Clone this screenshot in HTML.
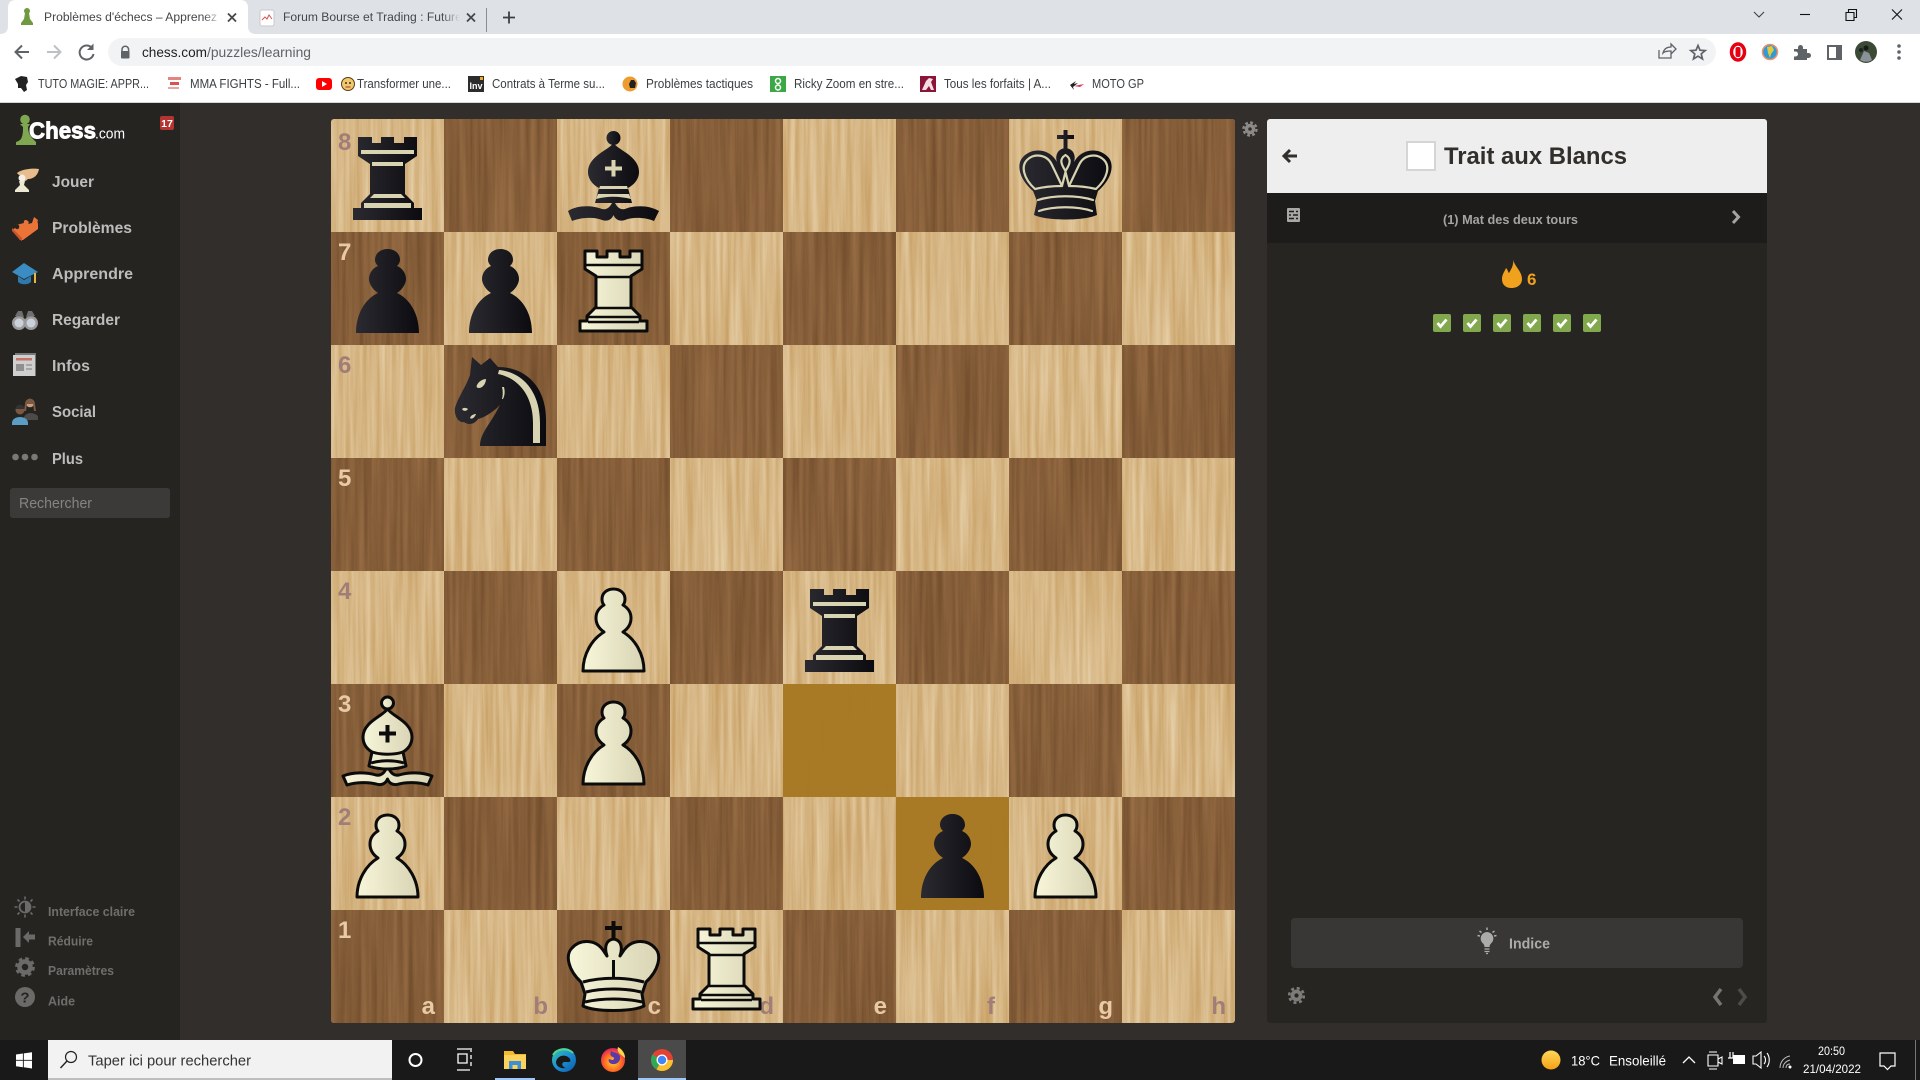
<!DOCTYPE html>
<html lang="fr">
<head>
<meta charset="utf-8">
<title>Problèmes d'échecs</title>
<style>
html,body{margin:0;padding:0;background:#312e2b;width:1920px;height:1080px;overflow:hidden}
svg{display:block;position:absolute;left:0;top:0}
text{font-family:"Liberation Sans",sans-serif;white-space:pre}
.tab{font-size:12.1px}
.bm{font-size:12.5px;fill:#3c4043}
.nav{font-size:16px;font-weight:bold;fill:#bdbcbb}
.low{font-size:13px;font-weight:bold;fill:#6f6e6c}
.coL{font-size:24px;font-weight:bold;fill:#a07d76}
.coD{font-size:24px;font-weight:bold;fill:#e9caa6}
.wk{fill:url(#wg);stroke:#0b0b0b;stroke-width:3;stroke-linejoin:round}
.bk{fill:url(#bg)}
.cr{fill:#d8d3b0}
.crl{fill:none;stroke:#d8d3b0;stroke-width:2.2;stroke-linecap:round;stroke-linejoin:round}
.kl{fill:none;stroke:#0b0b0b;stroke-width:3}
.ic{fill:none;stroke:#5f6368;stroke-width:2}
</style>
</head>
<body>
<svg width="1920" height="1080" viewBox="0 0 1920 1080" xmlns="http://www.w3.org/2000/svg">
<defs>
<linearGradient id="wg" x1="0" x2="1" y1="0" y2="0"><stop offset="0" stop-color="#f8f6da"/><stop offset="1" stop-color="#d8d4b4"/></linearGradient>
<linearGradient id="bg" x1="0" x2="1" y1="0" y2="0"><stop offset="0" stop-color="#2a2a30"/><stop offset="1" stop-color="#0b0b10"/></linearGradient>
<linearGradient id="fade1" gradientUnits="userSpaceOnUse" x1="204" x2="222" y1="0" y2="0"><stop offset="0" stop-color="#45474a"/><stop offset="1" stop-color="#fff"/></linearGradient>
<linearGradient id="fade2" gradientUnits="userSpaceOnUse" x1="442" x2="460" y1="0" y2="0"><stop offset="0" stop-color="#45474a"/><stop offset="1" stop-color="#dee1e6"/></linearGradient>
<linearGradient id="sun" x1="0" x2="0" y1="0" y2="1"><stop offset="0" stop-color="#ffd75a"/><stop offset="1" stop-color="#f59f14"/></linearGradient>
<linearGradient id="edge" x1="0" x2="1" y1="0" y2="1"><stop offset="0" stop-color="#37c7a5"/><stop offset=".5" stop-color="#1b8fd6"/><stop offset="1" stop-color="#0c5aa8"/></linearGradient>
<radialGradient id="ff" cx=".5" cy=".6" r=".6"><stop offset="0" stop-color="#ffcf3a"/><stop offset=".6" stop-color="#ff6a1e"/><stop offset="1" stop-color="#d81f6a"/></radialGradient>
<filter id="woodL" x="0" y="0" width="100%" height="100%" color-interpolation-filters="sRGB">
<feTurbulence type="fractalNoise" baseFrequency="0.2 0.006" numOctaves="4" seed="7"/>
<feColorMatrix type="matrix" values="0.15 0 0 0 0.765  0.24 0 0 0 0.595  0.34 0 0 0 0.35  0 0 0 0 1"/>
</filter>
<filter id="woodD" x="0" y="0" width="100%" height="100%" color-interpolation-filters="sRGB">
<feTurbulence type="fractalNoise" baseFrequency="0.18 0.005" numOctaves="4" seed="21"/>
<feColorMatrix type="matrix" values="0.2 0 0 0 0.425  0.17 0 0 0 0.285  0.13 0 0 0 0.16  0 0 0 0 1"/>
</filter>
<clipPath id="boardClip"><rect x="0" y="0" width="904" height="904" rx="3"/></clipPath>
<clipPath id="darkSq"><path d="M113 0h113v113h-113zM339 0h113v113h-113zM565 0h113v113h-113zM791 0h113v113h-113zM0 113h113v113h-113zM226 113h113v113h-113zM452 113h113v113h-113zM678 113h113v113h-113zM113 226h113v113h-113zM339 226h113v113h-113zM565 226h113v113h-113zM791 226h113v113h-113zM0 339h113v113h-113zM226 339h113v113h-113zM452 339h113v113h-113zM678 339h113v113h-113zM113 452h113v113h-113zM339 452h113v113h-113zM565 452h113v113h-113zM791 452h113v113h-113zM0 565h113v113h-113zM226 565h113v113h-113zM452 565h113v113h-113zM678 565h113v113h-113zM113 678h113v113h-113zM339 678h113v113h-113zM565 678h113v113h-113zM791 678h113v113h-113zM0 791h113v113h-113zM226 791h113v113h-113zM452 791h113v113h-113zM678 791h113v113h-113z"/></clipPath>
<clipPath id="t1c"><rect x="40" y="0" width="182" height="34"/></clipPath>
<clipPath id="t2c"><rect x="280" y="0" width="180" height="34"/></clipPath>
</defs>

<!-- page -->
<rect width="1920" height="1080" fill="#312e2b"/>

<!-- chrome tabs -->
<rect width="1920" height="34" fill="#dee1e6"/>
<rect y="34" width="1920" height="68" fill="#fff"/>
<rect y="102" width="1920" height="1" fill="#d5d5d5"/>
<path d="M0 34Q8 34 8 26V8Q8 0 16 0H240Q248 0 248 8V26Q248 34 256 34Z" fill="#fff"/>
<!-- tab 1 favicon pawn -->
<g fill="#6f9a3f"><circle cx="27" cy="11" r="3"/><path d="M25 13h4l1 6 3 4v2H21v-2l3-4z"/></g>
<g clip-path="url(#t1c)"><text x="44" y="21" class="tab" fill="url(#fade1)">Problèmes d'échecs – Apprenez à jouer</text></g>
<path d="M228 13.500l8 8M236 13.500l-8 8" stroke="#45474a" stroke-width="1.800"/>
<!-- tab 2 -->
<rect x="260" y="10" width="14" height="16" rx="2" fill="#fff" stroke="#c9c9c9"/>
<path d="M262 20l3-3 2 2 2-4 3 4" fill="none" stroke="#d9534f" stroke-width="1"/>
<g clip-path="url(#t2c)"><text x="283" y="21" class="tab" fill="url(#fade2)">Forum Bourse et Trading : Futures et options</text></g>
<path d="M467 13.500l8 8M475 13.500l-8 8" stroke="#45474a" stroke-width="1.800"/>
<rect x="486" y="8" width="1" height="24" fill="#8b8e92"/>
<path d="M509 11.500v12M503 17.500h12" stroke="#3c4043" stroke-width="1.800"/>
<!-- window controls -->
<path d="M1754 12l5 5 5-5" fill="none" stroke="#3c4043" stroke-width="1.100"/>
<path d="M1800 14.500h10" stroke="#111" stroke-width="1.100"/>
<path d="M1846 12.500h8v8h-8zM1848.500 12.500v-3h8v8h-2.500" fill="none" stroke="#111" stroke-width="1.100"/>
<path d="M1892 9.500l10 10M1902 9.500l-10 10" stroke="#111" stroke-width="1.100"/>

<!-- toolbar -->
<rect x="108" y="38" width="1608" height="28" rx="14" fill="#f1f3f4"/>
<path d="M29 52H16M22 45.500l-6.500 6.500 6.500 6.500" fill="none" stroke="#5f6368" stroke-width="2"/>
<path d="M47 52h13M54 45.500l6.500 6.500-6.500 6.500" fill="none" stroke="#bdc1c6" stroke-width="2"/>
<path d="M92 48a7 7 0 1 0 1.500 6" fill="none" stroke="#5f6368" stroke-width="2"/><path d="M93.500 43.500v6.500h-6.500z" fill="#5f6368"/>
<path d="M122 52v-2.500a3.300 3.300 0 0 1 6.600 0V52" fill="none" stroke="#5f6368" stroke-width="1.500"/><rect x="121" y="51" width="8.500" height="7.500" rx="1" fill="#5f6368"/>
<text x="142" y="57" font-size="14" fill="#202124" textLength="65" lengthAdjust="spacingAndGlyphs">chess.com</text>
<text x="207" y="57" font-size="14" fill="#5f6368" textLength="104" lengthAdjust="spacingAndGlyphs">/puzzles/learning</text>
<!-- share -->
<path d="M1659 50v8h12v-4M1663 53c1-4 4-6 8-6v-3l5 5-5 5v-3c-3 0-6 0-8 2z" fill="none" stroke="#5f6368" stroke-width="1.300"/>
<!-- star -->
<path d="M1698 45.500l2 4.700 5.200.4-4 3.300 1.300 5-4.500-2.700-4.500 2.700 1.300-5-4-3.300 5.200-.4z" fill="none" stroke="#5f6368" stroke-width="1.700"/>
<!-- opera -->
<ellipse cx="1738" cy="52" rx="6.500" ry="8" fill="#fff" stroke="#e60012" stroke-width="3.500"/><rect x="1735.500" y="47" width="5" height="10" rx="2" fill="#e60012"/>
<!-- globe -->
<circle cx="1770" cy="52" r="7.500" fill="#2f9ad6" stroke="#f0906c" stroke-width="1.500"/><path d="M1767 47l5-1 2 4-3 4-1 4-2-5z" fill="#e0c93a"/>
<!-- puzzle -->
<path d="M1794 49h4v-1.500a2.500 2.500 0 0 1 5 0V49h4v4h1.500a2.500 2.500 0 0 1 0 5H1807v2h-13v-3.500h1.500a2.500 2.500 0 0 0 0-5H1794z" fill="#5f6368"/>
<!-- side panel -->
<rect x="1828" y="46" width="13" height="13" fill="none" stroke="#5f6368" stroke-width="2"/><rect x="1836" y="45" width="6" height="15" fill="#5f6368"/>
<!-- avatar -->
<circle cx="1866" cy="52" r="11" fill="#3b4a35"/><path d="M1860 60l4-9 5 2 3 7a11 11 0 0 1-12 0z" fill="#8a9298"/><circle cx="1866" cy="48" r="2.500" fill="#16181a"/><circle cx="1861" cy="50" r="2" fill="#1c2024"/>
<g fill="#5f6368"><circle cx="1899" cy="46" r="1.800"/><circle cx="1899" cy="52" r="1.800"/><circle cx="1899" cy="58" r="1.800"/></g>

<!-- bookmarks -->
<path d="M15 79l6-3 6 1 1 5-2 3 1 5-3 2-3-4-3 0 0-4z" fill="#222"/>
<text x="38" y="88" class="bm" textLength="111" lengthAdjust="spacingAndGlyphs">TUTO MAGIE: APPR...</text>
<rect x="168" y="77" width="13" height="3" fill="#e5837f"/><rect x="170" y="82" width="9" height="3" fill="#d9534f"/><rect x="168" y="87" width="11" height="2" fill="#e9a5a5"/>
<text x="190" y="88" class="bm" textLength="110" lengthAdjust="spacingAndGlyphs">MMA FIGHTS - Full...</text>
<rect x="316" y="78" width="16" height="12" rx="3" fill="#f00"/><path d="M322 81l5 3-5 3z" fill="#fff"/>
<circle cx="348" cy="84" r="6.500" fill="#f2c96a" stroke="#5a3d1a"/><circle cx="346" cy="83" r="1" fill="#333"/><circle cx="350" cy="83" r="1" fill="#333"/><path d="M345.500 87h5" stroke="#a33" stroke-width="1"/>
<text x="357" y="88" class="bm" textLength="94" lengthAdjust="spacingAndGlyphs">Transformer une...</text>
<rect x="468" y="76" width="16" height="16" fill="#2c2c2c"/><text x="469.500" y="89" font-size="9" font-weight="bold" fill="#fff">Inv</text><rect x="480" y="77" width="3" height="3" fill="#f5a623"/>
<text x="492" y="88" class="bm" textLength="113" lengthAdjust="spacingAndGlyphs">Contrats à Terme su...</text>
<circle cx="630" cy="84" r="7.500" fill="#ee9b2d"/><path d="M631 80h3l2 3-1 5h-5l-1-4z" fill="#222"/>
<text x="646" y="88" class="bm" textLength="107" lengthAdjust="spacingAndGlyphs">Problèmes tactiques</text>
<rect x="770" y="76" width="16" height="16" fill="#3aa845"/><circle cx="778" cy="81" r="2.500" fill="none" stroke="#fff" stroke-width="1.500"/><circle cx="778" cy="87.500" r="2.500" fill="none" stroke="#fff" stroke-width="1.500"/>
<text x="794" y="88" class="bm" textLength="110" lengthAdjust="spacingAndGlyphs">Ricky Zoom en stre...</text>
<rect x="920" y="76" width="16" height="16" fill="#8a1538"/><path d="M922 90l4-9 3-3 4 1-2 3 3 8h-3l-2-4-3 4z" fill="#f5dfe2"/>
<text x="944" y="88" class="bm" textLength="107" lengthAdjust="spacingAndGlyphs">Tous les forfaits | A...</text>
<path d="M1070 85l6-4-2 3 4-1-5 4 1 3z" fill="#222"/><path d="M1074 86l10-2-4 3z" fill="#d8365a"/>
<text x="1092" y="88" class="bm" textLength="52" lengthAdjust="spacingAndGlyphs">MOTO GP</text>

<!-- sidebar -->
<rect x="0" y="103" width="180" height="937" fill="#262421"/>
<!-- logo -->
<g fill="#7fa650"><circle cx="25" cy="119.500" r="4.800"/><path d="M20 124h10l-2 3c0 5 2 9 5 12l3 3v3H16v-3c3-1 4-2 5-3 2-4 2-8 2-12z"/></g>
<text x="29" y="138.500" font-size="23" font-weight="bold" fill="#fff" stroke="#fff" stroke-width=".9" textLength="67" lengthAdjust="spacingAndGlyphs">Chess</text>
<text x="95" y="138.500" font-size="15" fill="#fff" textLength="30" lengthAdjust="spacingAndGlyphs">.com</text>
<rect x="160" y="116" width="14" height="14" rx="2" fill="#b33430"/>
<text x="167" y="127" font-size="10.500" font-weight="bold" fill="#fff" text-anchor="middle">17</text>
<!-- nav icons -->
<path d="M17 173c5-4 16-5 22-4-1 6-5 10-11 10-3 3-6 3-8 1l2-4c-2-1-4-1-5-3z" fill="#e8bc8c"/>
<circle cx="22" cy="178" r="3.500" fill="#f4f2e6"/><path d="M19 181h6l-1 4 5 5v2H15v-2l5-5z" fill="#ece8d2"/>
<path d="M24 223c-1-3 2-4 4-2 1 1 1 2 0 3l4-1 2-6 4 3c-1 2 0 3 0 4l0 5-15 11-3 0-8-10 3-2c1 1 3 2 4 0 1-3-1-4-3-3z" fill="#ea7338"/><path d="M12 228l10 10 0 3-2-1-8-9z" fill="#c9532a"/>
<path d="M12 272l12-9 14 9-14 7z" fill="#3a8cc2"/><path d="M18 276v6c3 3 10 3 13 0v-6l-7 4z" fill="#2f78ab"/><rect x="34" y="273" width="2" height="10" fill="#e6b544"/>
<circle cx="19" cy="323" r="7" fill="#9b9b9b"/><circle cx="31" cy="323" r="7" fill="#9b9b9b"/><circle cx="19" cy="323" r="4.500" fill="#c9d2da"/><circle cx="31" cy="323" r="4.500" fill="#c9d2da"/><path d="M15 316l3-5h4l2 6zM35 316l-3-5h-4l-2 6z" fill="#6f6f6f"/>
<rect x="15" y="353" width="21" height="23" fill="#777"/><rect x="13" y="355" width="22" height="21" fill="#cfcfcf"/><rect x="16" y="358" width="16" height="2.500" fill="#c5726a"/><rect x="16" y="364" width="8" height="7" fill="#8f8f8f"/><rect x="26" y="364" width="6" height="2" fill="#a5a5a5"/><rect x="26" y="368" width="6" height="2" fill="#a5a5a5"/>
<circle cx="30" cy="403" r="4.300" fill="#c99f80"/><path d="M25 404c0-7 10-7 10 0l1 7h-2l-1-7h-6l-1 7h-2z" fill="#7a5a40"/><path d="M24 417c2-5 10-5 14-1v4H24z" fill="#4c4b49"/>
<circle cx="20" cy="410" r="4.500" fill="#7b5640"/><path d="M15.500 409a4.500 4.500 0 0 1 9 0z" fill="#333"/><path d="M12 423c0-8 16-8 16 0v2H12z" fill="#5b9ec5"/>
<g fill="#7a7978"><circle cx="15.500" cy="457" r="3.300"/><circle cx="25" cy="457" r="3.300"/><circle cx="34.500" cy="457" r="3.300"/></g>
<text x="52" y="187" class="nav" textLength="42" lengthAdjust="spacingAndGlyphs">Jouer</text>
<text x="52" y="233" class="nav" textLength="80" lengthAdjust="spacingAndGlyphs">Problèmes</text>
<text x="52" y="279" class="nav" textLength="81" lengthAdjust="spacingAndGlyphs">Apprendre</text>
<text x="52" y="325" class="nav" textLength="68" lengthAdjust="spacingAndGlyphs">Regarder</text>
<text x="52" y="371" class="nav" textLength="38" lengthAdjust="spacingAndGlyphs">Infos</text>
<text x="52" y="417" class="nav" textLength="44" lengthAdjust="spacingAndGlyphs">Social</text>
<text x="52" y="464" class="nav" textLength="31" lengthAdjust="spacingAndGlyphs">Plus</text>
<rect x="10" y="488" width="160" height="30" rx="3" fill="#3b3a38"/>
<text x="19" y="508" font-size="14.500" fill="#858483" textLength="73" lengthAdjust="spacingAndGlyphs">Rechercher</text>
<!-- bottom sidebar -->
<circle cx="25" cy="907" r="5.500" fill="none" stroke="#6b6a68" stroke-width="1.800"/><path d="M25 901.500a5.500 5.500 0 0 1 0 11z" fill="#6b6a68"/>
<g stroke="#6b6a68" stroke-width="1.600"><path d="M25 896.500v3M25 914.500v3M14.500 907h3M32.500 907h3M17.500 899.500l2 2M30.500 912.500l2 2M17.500 914.500l2-2M30.500 901.500l2-2"/></g>
<rect x="15.500" y="928" width="5" height="19" fill="#6b6a68"/><path d="M23 937l6-6v3.500h6v5h-6v3.500z" fill="#6b6a68"/>
<circle cx="25" cy="967" r="5.500" fill="none" stroke="#6b6a68" stroke-width="4.500"/><circle cx="25" cy="967" r="8.500" fill="none" stroke="#6b6a68" stroke-width="2.800" stroke-dasharray="3.600 3.075"/>
<circle cx="25" cy="997" r="10" fill="#6b6a68"/><text x="25" y="1002.500" font-size="15" font-weight="bold" fill="#262421" text-anchor="middle">?</text>
<text x="48" y="916" class="low" textLength="87" lengthAdjust="spacingAndGlyphs">Interface claire</text>
<text x="48" y="945.500" class="low" textLength="45" lengthAdjust="spacingAndGlyphs">Réduire</text>
<text x="48" y="975" class="low" textLength="66" lengthAdjust="spacingAndGlyphs">Paramètres</text>
<text x="48" y="1005.500" class="low" textLength="27" lengthAdjust="spacingAndGlyphs">Aide</text>

<!-- board -->
<g transform="translate(331 119)">
<g clip-path="url(#boardClip)">
<rect width="904" height="904" filter="url(#woodL)"/>
<g clip-path="url(#darkSq)"><rect width="904" height="904" filter="url(#woodD)"/></g>
<rect x="452" y="565" width="113" height="113" fill="#a97b25" opacity=".97"/>
<rect x="565" y="678" width="113" height="113" fill="#a97b25" opacity=".97"/>
</g>
<!-- coordinates -->
<text x="7" y="31" class="coL">8</text>
<text x="7" y="141" class="coD">7</text>
<text x="7" y="254" class="coL">6</text>
<text x="7" y="367" class="coD">5</text>
<text x="7" y="480" class="coL">4</text>
<text x="7" y="593" class="coD">3</text>
<text x="7" y="706" class="coL">2</text>
<text x="7" y="819" class="coD">1</text>
<text x="104" y="895" class="coD" text-anchor="end">a</text>
<text x="217" y="895" class="coL" text-anchor="end">b</text>
<text x="330" y="895" class="coD" text-anchor="end">c</text>
<text x="443" y="895" class="coL" text-anchor="end">d</text>
<text x="556" y="895" class="coD" text-anchor="end">e</text>
<text x="664" y="895" class="coL" text-anchor="end">f</text>
<text x="782" y="895" class="coD" text-anchor="end">g</text>
<text x="895" y="895" class="coL" text-anchor="end">h</text>

<!-- black rook a8 -->
<g>
<path class="bk" d="M27 18H41V24H50V18H63V24H73V18H86V37L74 45V75L83 84V89H91V101H22V89H30V84L39 75V45L27 37Z"/>
<path class="cr" d="M30 31H83V35H30ZM41 43H72V47H41ZM43 75H70L74 79H39ZM33 84H80V89H33Z"/>
</g>
<!-- black bishop c8 -->
<g transform="translate(226 0)">
<circle class="bk" cx="56.500" cy="19" r="7"/>
<path class="bk" d="M56.500 24C52 31 31 37 31 53C31 60 36 66 42 69L38 84H75L71 69C77 66 82 60 82 53C82 37 61 31 56.500 24Z"/>
<path class="bk" d="M11 92C20 86 35 86 45 90C50 91 53 88 55 84H58C60 88 63 91 68 90C78 86 92 86 102 92L97 102C88 98 75 98 68 101C62 103 58 100 56.500 96C55 100 51 103 45 101C38 98 25 98 15 102Z"/>
<path class="cr" d="M54.500 41h4v6.500h6.500v4h-6.500v6h-4v-6h-6.500v-4h6.500zM43 67H70L71 70H42ZM41 75H72L74 80C62 77 50 77 39 80Z"/>
</g>
<!-- black king g8 -->
<g transform="translate(678 0)">
<path class="bk" d="M54.500 11h4v5h6.500v4h-6.500v10h-4v-10H48v-4h6.500z"/>
<path class="bk" d="M24 72C10 60 7 45 14 38C22 29 38 29 46 40L48 43C46 37 48 30 56.500 29C65 30 67 37 65 43L67 40C75 29 91 29 99 38C106 45 103 60 89 72L86 82L88 96C75 102 38 102 25 96L28 82Z"/>
<path class="crl" d="M26 70C14 59 12 47 18 41C25 34 38 35 43 46L53 67C43 67 34 68 26 70ZM87 70C99 59 101 47 95 41C88 34 75 35 70 46L60 67C70 67 79 68 87 70ZM56.500 52C52 45 50 40 56.500 36C63 40 61 45 56.500 52ZM29 81C45 76 68 76 84 81M30 92C45 87 68 87 83 92M53 67L56.500 53L60 67"/>
</g>
<!-- black pawns -->
<g transform="translate(0 113)"><path class="bk" d="M25 101C25 82 34 67 47 61C41 57 38 51 38 47C38 41 42 36 47 34C45 32 44 30 44 28C44 21 50 17 56.500 17C63 17 69 21 69 28C69 30 68 32 66 34C71 36 75 41 75 47C75 51 72 57 66 61C79 67 88 82 88 101Z"/></g>
<g transform="translate(113 113)"><path class="bk" d="M25 101C25 82 34 67 47 61C41 57 38 51 38 47C38 41 42 36 47 34C45 32 44 30 44 28C44 21 50 17 56.500 17C63 17 69 21 69 28C69 30 68 32 66 34C71 36 75 41 75 47C75 51 72 57 66 61C79 67 88 82 88 101Z"/></g>
<g transform="translate(565 678)"><path class="bk" d="M25 101C25 82 34 67 47 61C41 57 38 51 38 47C38 41 42 36 47 34C45 32 44 30 44 28C44 21 50 17 56.500 17C63 17 69 21 69 28C69 30 68 32 66 34C71 36 75 41 75 47C75 51 72 57 66 61C79 67 88 82 88 101Z"/></g>
<!-- white rook c7 -->
<g transform="translate(226 113)">
<path class="wk" d="M28 19H40V25H50V19H63V25H73V19H85V37L74 44V75L83 84V89H90V99H23V89H30V84L39 75V44L28 37Z"/>
<path class="kl" style="stroke-width:2.500" d="M29 33H84M39 45H74M39 76H74M31 85H82M31 90H82"/>
</g>
<!-- black knight b6 -->
<g transform="translate(113 226)">
<path class="bk" d="M28 12L37 20L46 13L54 22C80 22 102 40 102 75V101H36C36 88 46 80 56 60C50 66 42 72 34 74C30 80 24 80 20 77C14 78 10 70 11 63C14 52 22 42 26 30Z"/>
<path class="cr" d="M55 25C78 27 96 46 96 78V98H89V78C89 50 74 33 54 29Z"/>
<path class="cr" d="M33 40C35 36 39 34 42 34C42 38 39 43 35 43C33 43 32 42 33 40ZM60 42C61 46 61 50 59 54L58 54C59 50 59 46 58 42ZM18 64C20 62 23 63 24 64C22 67 19 66 18 64ZM26 73C27 70 30 69 32 69C31 72 28 75 26 73Z"/>
</g>
<!-- white pawns -->
<g transform="translate(226 452)"><path class="wk" d="M26 100C26 83 35 68 47 61C41 57 39 52 39 47C39 41 42 37 47 34C45 32 45 30 45 28C45 22 50 18 56.500 18C63 18 68 22 68 28C68 30 68 32 66 34C71 37 74 41 74 47C74 52 72 57 66 61C78 68 87 83 87 100Z"/></g>
<g transform="translate(226 565)"><path class="wk" d="M26 100C26 83 35 68 47 61C41 57 39 52 39 47C39 41 42 37 47 34C45 32 45 30 45 28C45 22 50 18 56.500 18C63 18 68 22 68 28C68 30 68 32 66 34C71 37 74 41 74 47C74 52 72 57 66 61C78 68 87 83 87 100Z"/></g>
<g transform="translate(0 678)"><path class="wk" d="M26 100C26 83 35 68 47 61C41 57 39 52 39 47C39 41 42 37 47 34C45 32 45 30 45 28C45 22 50 18 56.500 18C63 18 68 22 68 28C68 30 68 32 66 34C71 37 74 41 74 47C74 52 72 57 66 61C78 68 87 83 87 100Z"/></g>
<g transform="translate(678 678)"><path class="wk" d="M26 100C26 83 35 68 47 61C41 57 39 52 39 47C39 41 42 37 47 34C45 32 45 30 45 28C45 22 50 18 56.500 18C63 18 68 22 68 28C68 30 68 32 66 34C71 37 74 41 74 47C74 52 72 57 66 61C78 68 87 83 87 100Z"/></g>
<!-- black rook e4 -->
<g transform="translate(452 452)">
<path class="bk" d="M27 18H41V24H50V18H63V24H73V18H86V37L74 45V75L83 84V89H91V101H22V89H30V84L39 75V45L27 37Z"/>
<path class="cr" d="M30 31H83V35H30ZM41 43H72V47H41ZM43 75H70L74 79H39ZM33 84H80V89H33Z"/>
</g>
<!-- white bishop a3 -->
<g transform="translate(0 565)">
<circle class="wk" cx="56.500" cy="19" r="6"/>
<path class="wk" d="M12 92C22 88 35 88 45 91C50 92 53 89 55 85H58C60 89 63 92 68 91C78 88 91 88 101 92L97 101C88 98 75 98 68 100C62 102 58 99 56.500 95C55 99 51 102 45 100C38 98 25 98 16 101Z"/>
<path class="wk" d="M56.500 25C52 32 32 38 32 53C32 60 36 65 41 68L38 82C48 86 65 86 75 82L72 68C77 65 81 60 81 53C81 38 61 32 56.500 25Z"/>
<path d="M54.500 41h4v6.500h6.500v4h-6.500v7h-4v-7H48v-4h6.500z" fill="#0b0b0b"/>
<path class="kl" d="M41 68C50 71 63 71 72 68M40 79C50 76 63 76 73 79"/>
</g>
<!-- white king c1 -->
<g transform="translate(226 791)">
<path d="M54.500 11h4v5h6.500v4h-6.500v10h-4v-10H48v-4h6.500z" fill="#0b0b0b"/>
<path class="wk" d="M24 72C11 60 8 45 15 38C23 29 38 29 46 40L50 46C47 37 49 30 56.500 29C64 30 66 37 63 46L67 40C75 29 90 29 98 38C105 45 102 60 89 72L85 84L87 96C75 102 38 102 26 96L28 84Z"/>
<path class="kl" d="M26 72C45 67 68 67 87 72M29 82C45 78 68 78 84 82M28 92C45 88 68 88 85 92M56.500 68V50"/>
</g>
<!-- white rook d1 -->
<g transform="translate(339 791)">
<path class="wk" d="M28 19H40V25H50V19H63V25H73V19H85V37L74 44V75L83 84V89H90V99H23V89H30V84L39 75V44L28 37Z"/>
<path class="kl" style="stroke-width:2.500" d="M29 33H84M39 45H74M39 76H74M31 85H82M31 90H82"/>
</g>
</g>

<!-- gear by board -->
<circle cx="1250" cy="129" r="3.500" fill="none" stroke="#8c8b89" stroke-width="3.500"/><circle cx="1250" cy="129" r="6.500" fill="none" stroke="#8c8b89" stroke-width="2.400" stroke-dasharray="2.800 2.300"/>

<!-- right panel -->
<path d="M1267 122a3 3 0 0 1 3-3H1764a3 3 0 0 1 3 3V1020a3 3 0 0 1-3 3H1270a3 3 0 0 1-3-3Z" fill="#272522"/>
<path d="M1267 193V122a3 3 0 0 1 3-3H1764a3 3 0 0 1 3 3V193Z" fill="#eeeeee"/>
<rect x="1267" y="193" width="500" height="50" fill="#1e1c1b"/>
<path d="M1297 156h-12M1290 150l-6 6 6 6" fill="none" stroke="#312e2b" stroke-width="3"/>
<rect x="1407" y="142" width="28" height="28" fill="#fff" stroke="#d5d5d5" stroke-width="2"/>
<text x="1444" y="164" font-size="24" font-weight="bold" fill="#312e2b" textLength="183" lengthAdjust="spacingAndGlyphs">Trait aux Blancs</text>
<!-- list icon -->
<rect x="1287" y="208" width="13" height="14" rx="1" fill="#a8a7a6"/>
<path d="M1289 211.500h5M1296 211.500h2M1289 215h2M1293 215h5M1289 218.500h5M1296 218.500h2" stroke="#1e1c1b" stroke-width="1.500"/>
<text x="1443" y="224" font-size="13" font-weight="bold" fill="#a5a4a3" textLength="135" lengthAdjust="spacingAndGlyphs">(1) Mat des deux tours</text>
<path d="M1733 211l5.500 6-5.500 6" fill="none" stroke="#a5a4a3" stroke-width="3"/>
<!-- flame -->
<path d="M1513 259C1514 266 1522 271 1522 279C1522 285 1517 288 1511.500 288C1506 288 1502 285 1502 279C1502 274 1505 271 1506 268C1508 270 1508 272 1509 273C1512 268 1514 264 1513 259Z" fill="#f0a21f"/>
<text x="1527" y="285" font-size="17" font-weight="bold" fill="#f0a21f">6</text>
<!-- checks -->
<g fill="#81a84c"><rect x="1433" y="314" width="18" height="18" rx="2"/><rect x="1463" y="314" width="18" height="18" rx="2"/><rect x="1493" y="314" width="18" height="18" rx="2"/><rect x="1523" y="314" width="18" height="18" rx="2"/><rect x="1553" y="314" width="18" height="18" rx="2"/><rect x="1583" y="314" width="18" height="18" rx="2"/></g>
<g fill="none" stroke="#fff" stroke-width="2.800"><path d="M1437.500 323l3 3.500 6-7"/><path d="M1467.500 323l3 3.500 6-7"/><path d="M1497.500 323l3 3.500 6-7"/><path d="M1527.500 323l3 3.500 6-7"/><path d="M1557.500 323l3 3.500 6-7"/><path d="M1587.500 323l3 3.500 6-7"/></g>
<!-- hint button -->
<rect x="1291" y="918" width="452" height="50" rx="4" fill="#383735"/>
<path d="M1487 932a6.500 6.500 0 0 1 4 11.500c-1 1-1.500 2-1.500 3.500h-5c0-1.500-.5-2.500-1.500-3.500a6.500 6.500 0 0 1 4-11.500z" fill="#ababaa"/>
<path d="M1484.500 949h5M1484.500 951.500h5M1486 953.500h2" stroke="#ababaa" stroke-width="1.300"/>
<path d="M1487 927.500v2.500M1479.500 931l2 1.500M1494.500 931l-2 1.500M1477.500 935.500l2.500 .5M1496.500 935.500l-2.500 .5" stroke="#ababaa" stroke-width="1.500"/>
<text x="1509" y="948.500" font-size="14.500" font-weight="bold" fill="#ababaa" textLength="41" lengthAdjust="spacingAndGlyphs">Indice</text>
<circle cx="1296.500" cy="995.500" r="4" fill="none" stroke="#7d7c7a" stroke-width="3.800"/><circle cx="1296.500" cy="995.500" r="7.300" fill="none" stroke="#7d7c7a" stroke-width="2.600" stroke-dasharray="3 2.730"/>
<path d="M1721 989l-6 8 6 8" fill="none" stroke="#76756f" stroke-width="3.500"/>
<path d="M1739 989l6 8-6 8" fill="none" stroke="#4d4c49" stroke-width="3.500"/>

<!-- taskbar -->
<rect y="1040" width="1920" height="40" fill="#191919"/>
<g fill="#fff"><path d="M16 1054.500l6.900-1v6.400H16zM23.800 1053.400l8.200-1.200v7.700h-8.200zM16 1060.800h6.900v6.400l-6.900-1zM23.800 1060.800H32v7.700l-8.200-1.200z"/></g>
<rect x="48" y="1040" width="344" height="40" fill="#f2f2f2"/>
<rect x="48" y="1078" width="344" height="2" fill="#bdbdbd"/>
<circle cx="71" cy="1057" r="5.500" fill="none" stroke="#222" stroke-width="1.200"/><path d="M67 1061l-6.500 7" stroke="#222" stroke-width="1.400"/>
<text x="88" y="1065.500" font-size="15" fill="#333" textLength="163" lengthAdjust="spacingAndGlyphs">Taper ici pour rechercher</text>
<circle cx="415.500" cy="1060" r="6" fill="none" stroke="#fff" stroke-width="2"/>
<path d="M457 1053h13M457 1074h13M458 1058h9v9h-9zM471 1052v4M471 1059v4M471 1066v4" fill="none" stroke="#fff" stroke-width="1.300" transform="translate(0 -4)"/>
<!-- explorer -->
<path d="M504 1051h9l2 3h11v15h-22z" fill="#f4b92d"/><rect x="504" y="1055" width="22" height="14" fill="#fbd35c"/><rect x="509" y="1061" width="12" height="8" fill="#3d8fd6"/><rect x="512.500" y="1065" width="5" height="4" fill="#fbd35c"/>
<rect x="495" y="1078" width="40" height="2" fill="#9ec7f5"/>
<!-- edge -->
<circle cx="564" cy="1060" r="12" fill="url(#edge)"/><path d="M556 1062c1-6 8-8 12-5 3 2 3 5 1 5h-5c-3 1-2 5 2 6-6 1-10-2-10-6z" fill="#191919"/><path d="M553 1055c3-6 14-8 20-2" fill="none" stroke="#53d58b" stroke-width="2"/>
<!-- firefox -->
<circle cx="613" cy="1060" r="12" fill="url(#ff)"/><path d="M611 1051c3 2 7 1 9 5 1 5-3 9-8 8-3-1-4-3-3-5l3 1c2 0 3-2 1-3-3-1-3-3-2-6z" fill="#5c3aa3"/><path d="M618 1047c5 3 7 7 7 11l-5-4c-2-2-3-4-2-7z" fill="#ffd84a"/>
<!-- chrome -->
<rect x="638" y="1040" width="48" height="40" fill="#4a4a4a"/>
<rect x="638" y="1078" width="48" height="2" fill="#9ec7f5"/>
<circle cx="662" cy="1060" r="11" fill="#e34133"/>
<path d="M662 1060l-5.500 9.500A11 11 0 0 1 652.500 1054.500z" fill="#31a853"/>
<path d="M662 1060h11a11 11 0 0 1-16.500 9.500z" fill="#fbc02d"/>
<circle cx="662" cy="1060" r="5.500" fill="#fff"/><circle cx="662" cy="1060" r="4.200" fill="#4285f4"/>

<!-- tray -->
<circle cx="1551" cy="1060" r="9.500" fill="url(#sun)"/>
<text x="1571" y="1065.500" font-size="14" fill="#fff" textLength="29" lengthAdjust="spacingAndGlyphs">18°C</text>
<text x="1609" y="1065.500" font-size="14" fill="#fff" textLength="57" lengthAdjust="spacingAndGlyphs">Ensoleillé</text>
<path d="M1683 1063l6-6 6 6" fill="none" stroke="#fff" stroke-width="1.300"/>
<path d="M1708 1055h10v11h-10zM1718 1059l4-2v7l-4-2zM1709 1052h8M1709 1069h8" fill="none" stroke="#fff" stroke-width="1.100"/>
<rect x="1733" y="1055" width="12" height="9" fill="#fff"/><path d="M1730 1052v6M1733 1052v6M1728 1058h7" stroke="#fff" stroke-width="1.200"/>
<path d="M1753 1056h3l5-4v16l-5-4h-3zM1764 1056c2 2 2 6 0 8M1767 1053c3 4 3 10 0 14" fill="none" stroke="#fff" stroke-width="1.100"/>
<path d="M1780 1068c0-6 4-11 10-12M1783 1068c0-4 3-7 7-8M1786 1068c0-2 1-4 4-4" fill="none" stroke="#bbb" stroke-width="1"/><circle cx="1790" cy="1067" r="1.500" fill="#fff"/>
<text x="1831.500" y="1055" font-size="12" fill="#fff" text-anchor="middle" textLength="27" lengthAdjust="spacingAndGlyphs">20:50</text>
<text x="1832" y="1073" font-size="12" fill="#fff" text-anchor="middle" textLength="58" lengthAdjust="spacingAndGlyphs">21/04/2022</text>
<path d="M1880 1053h15v13h-4l-3.500 3.500-3.500-3.500h-4z" fill="none" stroke="#fff" stroke-width="1.200"/>
<rect x="1915" y="1040" width="1" height="40" fill="#777"/>
</svg>
</body>
</html>
